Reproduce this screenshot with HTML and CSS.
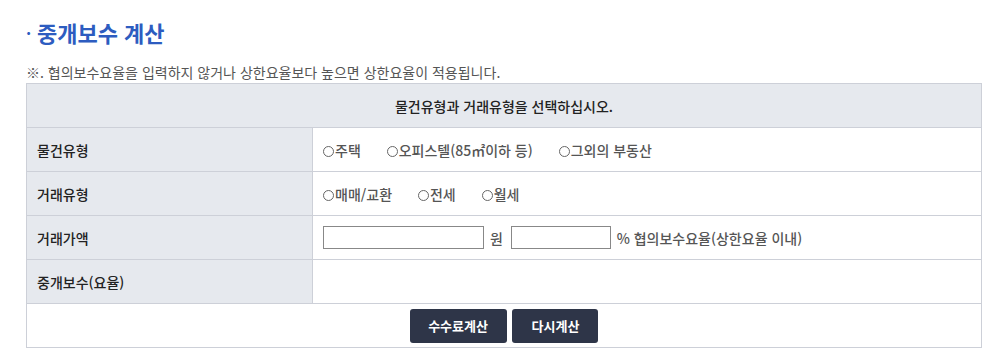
FILE: index.html
```html
<!DOCTYPE html>
<html lang="ko">
<head>
    <meta charset="UTF-8">
    <title>중개보수 계산</title>
    <link rel="stylesheet" href="styles.css">
</head>
<body>
    <div class="wrap">
        <h2 class="title"><span class="dot">·</span>중개보수 계산</h2>
        <p class="note">※. 협의보수요율을 입력하지 않거나 상한요율보다 높으면 상한요율이 적용됩니다.</p>

        <table class="calc">
            <tr>
                <th colspan="2" class="head">물건유형과 거래유형을 선택하십시오.</th>
            </tr>
            <tr>
                <th>물건유형</th>
                <td>
                    <label class="opt"><input type="radio" name="kind">주택</label>
                    <label class="opt"><input type="radio" name="kind">오피스텔(85㎡이하 등)</label>
                    <label class="opt"><input type="radio" name="kind">그외의 부동산</label>
                </td>
            </tr>
            <tr>
                <th>거래유형</th>
                <td>
                    <label class="opt"><input type="radio" name="deal">매매/교환</label>
                    <label class="opt"><input type="radio" name="deal">전세</label>
                    <label class="opt"><input type="radio" name="deal">월세</label>
                </td>
            </tr>
            <tr>
                <th>거래가액</th>
                <td>
                    <input type="text" class="price"> <span class="unit">원</span>
                    <input type="text" class="rate"> <span class="unit">% 협의보수요율(상한요율 이내)</span>
                </td>
            </tr>
            <tr>
                <th>중개보수(요율)</th>
                <td></td>
            </tr>
            <tr>
                <td colspan="2" class="btns">
                    <button class="btn btn-calc">수수료계산</button>
                    <button class="btn btn-reset">다시계산</button>
                </td>
            </tr>
        </table>
    </div>
</body>
</html>
```

FILE: styles.css
```css
body {
    margin: 0;
    font-family: "Noto Sans CJK KR", "Noto Sans", sans-serif;
    color: #333;
    background: #fff;
}

.wrap {
    width: 956px;
    padding: 17px 0 0 26px;
}

.title {
    margin: 0;
    font-size: 22px;
    font-weight: 700;
    color: #2d5cc0;
    line-height: 30px;
}

.title .dot {
    display: inline-block;
    width: 11px;
    font-size: 16px;
    vertical-align: 2px;
}

.note {
    margin: 13px 0 0 0;
    font-size: 14px;
    line-height: 22px;
    color: #555;
}

.calc {
    width: 956px;
    border-collapse: collapse;
    font-size: 14px;
}

.calc th,
.calc td {
    border: 1px solid #cdd0d8;
    height: 43px;
    padding: 0 0 0 10px;
    text-align: left;
    font-weight: 500;
    color: #222;
}

.calc th {
    width: 275px;
    background: #e6e9ee;
}

.calc th.head {
    text-align: center;
    padding: 0;
}

.calc td {
    color: #555;
}

.opt {
    margin-right: 22px;
}

.opt input {
    -webkit-appearance: none;
    appearance: none;
    width: 11px;
    height: 11px;
    margin: 0 1px 0 0;
    border: 1px solid #666;
    border-radius: 50%;
    vertical-align: -1px;
    background: #fff;
}

.opt input:checked {
    background: radial-gradient(#444 35%, #fff 45%);
}

.price,
.rate {
    height: 23px;
    box-sizing: border-box;
    border: 1px solid #888;
    padding: 0 4px;
    vertical-align: middle;
}

.price {
    width: 161px;
}

.rate {
    width: 100px;
    margin-left: 4px;
}

.unit {
    margin-left: 2px;
    vertical-align: middle;
}

.calc td.btns {
    padding: 0;
    text-align: center;
}

.btn {
    height: 34px;
    padding: 0;
    margin: 0 1px;
    border: none;
    border-radius: 3px;
    background: #2e3548;
    color: #fff;
    font-family: inherit;
    font-size: 13px;
    font-weight: 700;
    white-space: nowrap;
    vertical-align: middle;
    cursor: pointer;
}

.btn-calc {
    width: 97px;
}

.btn-reset {
    width: 86px;
}
```
